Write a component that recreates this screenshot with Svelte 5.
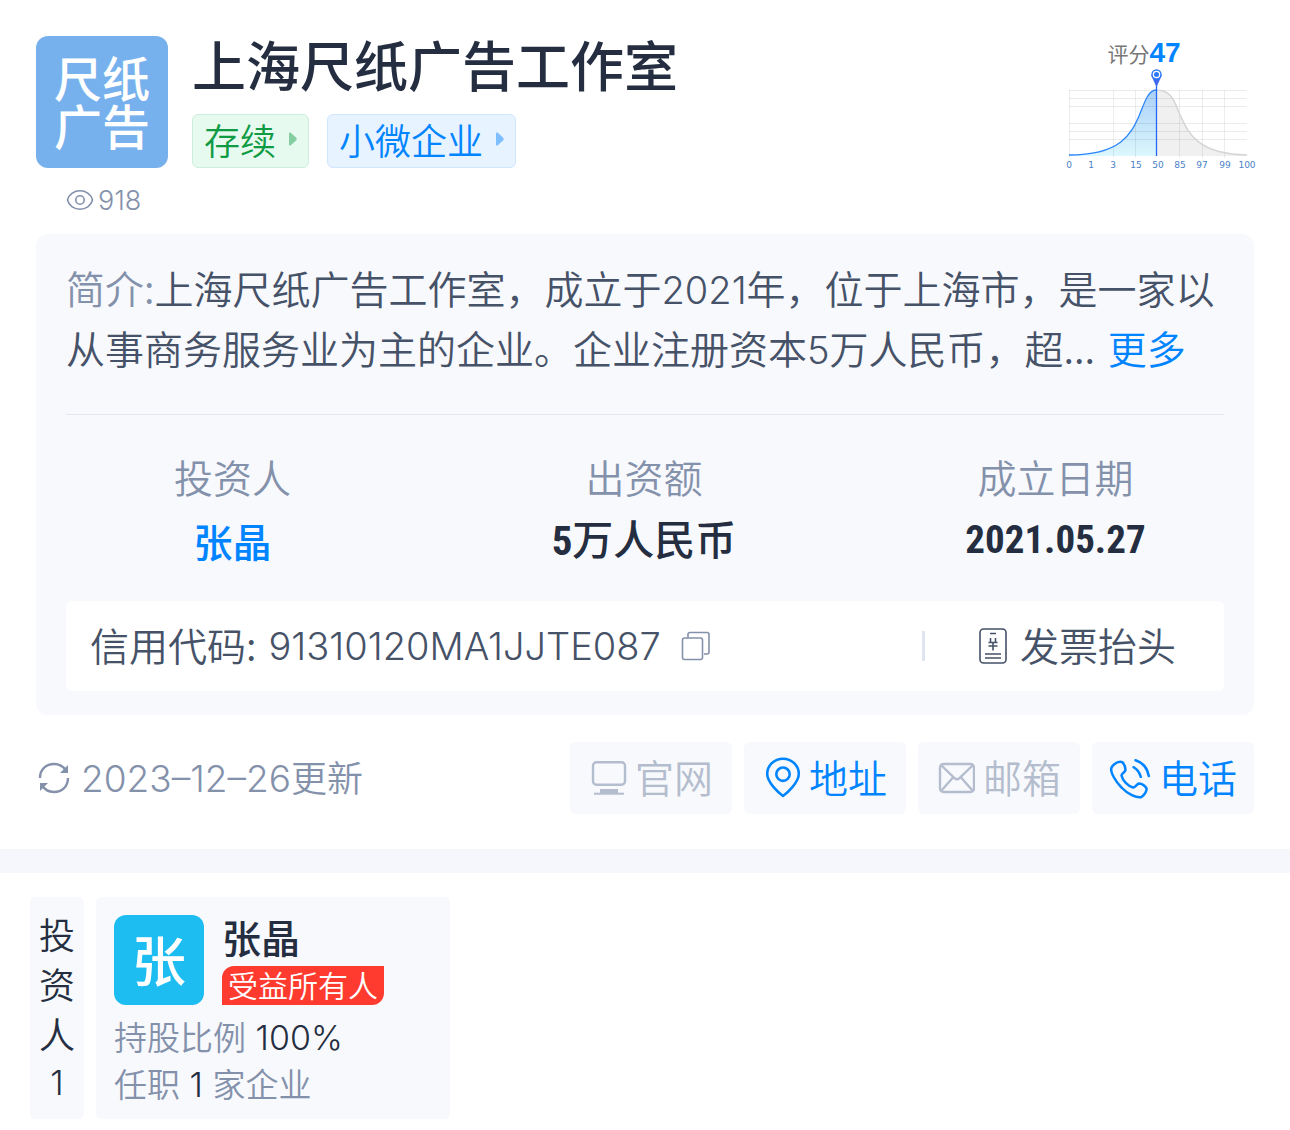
<script lang="ts">
	const company = {
		name: "上海尺纸广告工作室",
		views: 918,
		score: 47,
		code: "91310120MA1JJTE087",
	};
	// [label, x] under the score curve
	const ticks: [string, number][] = [
		["0", 3], ["1", 25], ["3", 47], ["15", 70], ["50", 92],
		["85", 114], ["97", 136], ["99", 159], ["100", 181],
	];
	const gridX = [3, 47, 69, 113, 136, 158];
	const gridY = [24, 32, 40, 57, 65, 73];
	const sideLabel = ["投", "资", "人"];
</script>

<main>
	<header>
		<div class="logo"><span>尺纸</span><span>广告</span></div>
		<div class="heading">
			<h1>{company.name}</h1>
			<div class="tags">
				<button type="button" class="tag green">存续
					<svg width="10" height="16" viewBox="0 0 10 16"><path d="M1 2.5Q1 1 2.500 1.500L8 6.500Q9.500 8 8 9.500L2.500 14.500Q1 15 1 13.500Z" fill="currentColor" /></svg>
				</button>
				<button type="button" class="tag blue">小微企业
					<svg width="10" height="16" viewBox="0 0 10 16"><path d="M1 2.5Q1 1 2.500 1.500L8 6.500Q9.500 8 8 9.500L2.500 14.500Q1 15 1 13.500Z" fill="currentColor" /></svg>
				</button>
			</div>
		</div>
		<div class="score">
			<div class="score-text">评分<b>{company.score}</b></div>
			<svg width="192" height="106" viewBox="0 0 192 106">
				<defs>
					<linearGradient id="fill" x1="0" y1="0" x2="0" y2="1">
						<stop offset="0" stop-color="#a9d0f8" />
						<stop offset="1" stop-color="#dcf7fd" />
					</linearGradient>
				</defs>
				<path d="M90 24C107 24 109 38 115 51C123 68 132 88 181 89V90H90Z" fill="#f0f0f0" />
				<path d="M3 89C55 89 65 68 73 50C78 38 82 24 90 24V90H3Z" fill="url(#fill)" />
				{#each gridY as y}
					<path d="M3 {y}.5H181" stroke="#000" stroke-opacity=".08" />
				{/each}
				{#each gridX as x}
					<path d="M{x}.5 24V92" stroke="#000" stroke-opacity=".07" />
				{/each}
				<path d="M90 24C107 24 109 38 115 51C123 68 132 88 181 89" fill="none" stroke="#d5d5d5" stroke-width="1.5" />
				<path d="M3 89C55 89 65 68 73 50C78 38 82 24 90 24" fill="none" stroke="#2b85fb" stroke-width="1.3" />
				<path d="M90.500 14V90" stroke="#2468f5" stroke-width="1.3" />
				<path d="M85 9L90.500 21L96 9Z" fill="#3d68f2" />
				<circle cx="90.500" cy="8.500" r="4.500" fill="#fff" stroke="#2b78f8" stroke-width="1.400" />
				<circle cx="90.500" cy="8.500" r="2.500" fill="#2b78f8" />
				{#each ticks as [label, x]}
					<text {x} y="102" text-anchor="middle">{label}</text>
				{/each}
			</svg>
		</div>
	</header>

	<div class="views">
		<svg width="28" height="22" viewBox="0 0 28 22" fill="none" stroke="currentColor" stroke-width="1.6"><path d="M1.500 11C3 5 8.500 1.800 14 1.800S25 5 26.500 11C25 17 19.500 20.200 14 20.200S3 17 1.500 11Z" /><circle cx="14" cy="11" r="4.200" /></svg>
		<span>{company.views}</span>
	</div>

	<section class="panel">
		<p class="intro"><span class="label">简介:</span>上海尺纸广告工作室，成立于<span class="num">2021</span>年，位于上海市，是一家以从事商务服务业为主的企业。企业注册资本<span class="num">5</span>万人民币，超... <a href="#more">更多</a></p>
		<dl>
			<div><dt>投资人</dt><dd><a href="#investor">张晶</a></dd></div>
			<div><dt>出资额</dt><dd class="amount"><span class="din">5</span>万人民币</dd></div>
			<div><dt>成立日期</dt><dd class="din">2021.05.27</dd></div>
		</dl>
		<div class="credit">
			<span class="code-label">信用代码:</span>
			<span class="num code">{company.code}</span>
			<button type="button" class="copy" aria-label="复制">
				<svg width="30" height="30" viewBox="0 0 30 30" fill="none" stroke="currentColor" stroke-width="1.600"><path d="M7 7V3.500Q7 1.500 9 1.500H26Q28 1.500 28 3.500V21Q28 23 26 23H23" /><rect x="1.500" y="7" width="20" height="21.500" rx="2" /></svg>
			</button>
			<button type="button" class="invoice">
				<svg width="28" height="38" viewBox="0 0 28 38" fill="none" stroke="currentColor" stroke-width="1.600"><rect x="1" y="2" width="26" height="34" rx="3.500" /><path d="M11 6.500H17M11.500 11V15M16.500 11V15M9.500 15.500H18.500M9.500 19H18.500M14 15.500V23.500M6 27H22M6 31H22" /></svg>
				<span>发票抬头</span>
			</button>
		</div>
	</section>

	<div class="actions">
		<button type="button" class="update">
			<svg width="36" height="34" viewBox="0 0 36 34" fill="none" stroke="currentColor" stroke-width="2.400"><path d="M4 17C4 8 10.500 3 18 3C23 3 27 5 30 9.500M32 17C32 26 25.500 31 18 31C13 31 9 29 6 24.500" /><path d="M32 4V12H24ZM4 30V22H12Z" fill="currentColor" stroke="none" /></svg>
			<span class="num">2023–12–26</span><span class="up">更新</span>
		</button>
		<button type="button" class="act" disabled>
			<svg width="38" height="38" viewBox="0 0 38 38" fill="none" stroke="currentColor" stroke-width="2.400"><rect x="4" y="3.200" width="32" height="22.500" rx="3.500" /><path d="M11 32H29" stroke-width="4" /><path d="M5 34.700H35" stroke-width="2" /></svg>
			<span>官网</span>
		</button>
		<button type="button" class="act">
			<svg width="38" height="42" viewBox="0 0 38 42" fill="none" stroke="currentColor" stroke-width="2.600"><path d="M20 39C16 36 4.200 25.500 4.200 17A15.800 15.300 0 0 1 35.800 17C35.800 25.500 24 36 20 39Z" stroke-linejoin="round" /><circle cx="20" cy="17.200" r="6.700" /></svg>
			<span>地址</span>
		</button>
		<button type="button" class="act" disabled>
			<svg width="38" height="34" viewBox="0 0 38 34" fill="none" stroke="currentColor" stroke-width="2.400"><rect x="3" y="3" width="34" height="28" rx="3.500" /><path d="M4.500 4.500L18 17.500Q20 19 22 17.500L35.500 4.500M4.500 29.500L16 16.500M35.500 29.500L24 16.500" /></svg>
			<span>邮箱</span>
		</button>
		<button type="button" class="act">
			<svg width="42" height="42" viewBox="0 0 42 42" fill="none" stroke="currentColor" stroke-width="2.500" stroke-linecap="round" stroke-linejoin="round"><path d="M5 7.500C8 5 11.500 4.500 13.500 5.200C15.500 7.500 16.500 11 16.500 13C16 15.500 12.500 16 12.500 18.500C13.500 23.500 19 29 24 30.500C26.500 30.500 27.500 27 30 26.500C33 26.700 36 29 37.500 31.200C38 34 35.500 38 32.500 40C28 41.500 18 36.500 12.500 30.500C6.500 24.500 1.500 15.500 2.200 11.500C2.700 10.200 3.800 8.500 5 7.500Z" /><path d="M26.500 3.200C33.500 5.500 38.500 11.500 39.800 19M24.500 10.200C28 12.200 30.500 15.500 31.800 19.800" /></svg>
			<span>电话</span>
		</button>
	</div>
</main>

<hr />

<section class="investors">
	<div class="side">
		{#each sideLabel as c}
			<span>{c}</span>
		{/each}
		<span class="count">1</span>
	</div>
	<div class="person">
		<div class="top">
			<div class="avatar">张</div>
			<div>
				<h2>张晶</h2>
				<span class="badge">受益所有人</span>
			</div>
		</div>
		<p>持股比例<span class="val">{" 100%"}</span></p>
		<p>任职<span class="val">{" 1 "}</span>家企业</p>
	</div>
</section>

<style>
	:global(body) {
		margin: 0;
		background: #fff;
		color: #465268;
		font-family: "Noto Sans CJK SC", sans-serif;
		font-size: 39px;
		font-weight: 350;
	}
	main {
		padding: 36px 36px 35px;
	}
	h1, h2, p, dl, dd {
		margin: 0;
	}
	button {
		border: none;
		background: none;
		padding: 0;
		margin: 0;
		font: inherit;
		color: inherit;
		cursor: pointer;
	}
	a {
		color: #0084ff;
		text-decoration: none;
	}
	svg {
		display: block;
		flex: none;
	}
	.num {
		font-family: Inter, sans-serif;
		font-size: 38px;
	}
	header {
		display: flex;
		height: 132px;
	}
	.logo {
		width: 132px;
		height: 132px;
		box-sizing: border-box;
		padding-bottom: 4px;
		border-radius: 12px;
		background: #77b1ed;
		color: #fff;
		display: flex;
		flex-direction: column;
		align-items: center;
		justify-content: center;
		font-size: 48px;
		line-height: 48px;
		font-weight: 500;
	}
	.heading {
		flex: 1;
		padding-left: 24px;
		display: flex;
		flex-direction: column;
		justify-content: space-between;
	}
	h1 {
		font-size: 54px;
		line-height: 56px;
		font-weight: 500;
		color: #242e40;
	}
	.tags {
		display: flex;
		gap: 18px;
	}
	.tag {
		display: flex;
		align-items: center;
		gap: 12px;
		height: 54px;
		box-sizing: border-box;
		padding: 0 10px 4px 11px;
		border: 1px solid;
		border-radius: 6px;
		font-size: 36px;
		line-height: 48px;
	}
	.tag svg {
		opacity: .45;
	}
	.green {
		color: #0e9b43;
		background: #e7faf0;
		border-color: #cdeedc;
	}
	.blue {
		color: #0084ff;
		background: #e7f3ff;
		border-color: #cfe6ff;
	}
	.score {
		width: 192px;
		margin-right: -4px;
	}
	.score-text {
		display: flex;
		align-items: baseline;
		justify-content: center;
		height: 30px;
		padding-right: 36px;
		font-size: 21px;
		line-height: 34px;
		font-weight: 400;
		color: #777;
	}
	.score-text b {
		font-family: "Liberation Sans", sans-serif;
		font-size: 28px;
		color: #0084ff;
	}
	.score text {
		font-family: "DejaVu Sans", sans-serif;
		font-size: 9px;
		font-weight: 400;
		fill: #4a7fc8;
	}
	.views {
		display: flex;
		align-items: center;
		gap: 4px;
		height: 64px;
		padding: 0 0 2px 30px;
		color: #8491ab;
		font-family: Inter, sans-serif;
		font-size: 27px;
	}
	.panel {
		padding: 23px 30px 24px;
		border-radius: 12px;
		background: #f8f9fd;
	}
	.intro {
		line-height: 60px;
		padding-bottom: 37px;
		border-bottom: 1px solid #e2e7ef;
	}
	.intro .num {
		line-height: 1;
	}
	.intro a {
		margin-left: 4px;
	}
	.label, dt {
		color: #8491ab;
	}
	dl {
		display: grid;
		grid-template-columns: 2fr 3fr 2fr;
		padding: 31px 4px 27px 2px;
		text-align: center;
	}
	dt {
		line-height: 60px;
	}
	dd {
		line-height: 68px;
		font-weight: 500;
		color: #242e40;
	}
	.din {
		font-family: "Roboto Condensed", Roboto, sans-serif;
		font-size: 39px;
		font-weight: 700;
	}
	.amount {
		font-size: 41px;
		line-height: 62px;
	}
	.amount .din {
		font-size: 41px;
		line-height: 1;
	}
	.credit {
		display: flex;
		align-items: center;
		height: 90px;
		padding: 0 24px;
		border-radius: 6px;
		background: #fff;
	}
	.code-label, .invoice span, .act span {
		padding-bottom: 4px;
	}
	.code {
		margin: 0 20px 0 12px;
	}
	.copy {
		color: #8491ab;
	}
	.invoice {
		display: flex;
		align-items: center;
		gap: 13px;
		margin-left: auto;
		padding: 0 24px 0 54px;
		line-height: 30px;
		border-left: 3px solid #e0e6f1;
		height: 30px;
	}
	.actions {
		display: flex;
		align-items: center;
		gap: 12px;
		padding-top: 27px;
	}
	.update {
		display: flex;
		align-items: center;
		margin-right: auto;
		font-size: 36px;
		color: #8491ab;
	}
	.update .num {
		font-size: 37px;
		padding-left: 9px;
	}
	.up {
		padding-bottom: 4px;
	}
	.act {
		display: flex;
		align-items: center;
		justify-content: center;
		gap: 8px;
		width: 162px;
		height: 72px;
		border-radius: 6px;
		background: #f8f9fd;
		color: #0084ff;
	}
	.act:disabled {
		color: #b4bdcd;
		cursor: default;
	}
	hr {
		margin: 0;
		border: none;
		height: 24px;
		background: #f6f7fc;
	}
	.investors {
		display: flex;
		gap: 12px;
		padding: 24px 30px 11px;
	}
	.side, .person {
		border-radius: 6px;
		background: #f8f9fd;
	}
	.side {
		width: 54px;
		box-sizing: border-box;
		padding: 11px 0;
		display: flex;
		flex-direction: column;
		align-items: center;
		font-size: 36px;
		line-height: 50px;
		color: #242e40;
	}
	.count {
		font-family: Inter, sans-serif;
		font-size: 34px;
	}
	.person {
		width: 354px;
		box-sizing: border-box;
		padding: 18px 18px 12px;
	}
	.top {
		display: flex;
		gap: 18px;
		margin-bottom: 8px;
	}
	.avatar {
		width: 90px;
		height: 90px;
		border-radius: 12px;
		background: #1dbcf1;
		color: #fff;
		text-align: center;
		font-size: 54px;
		line-height: 88px;
		font-weight: 500;
	}
	h2 {
		font-size: 39px;
		line-height: 42px;
		padding-bottom: 9px;
		font-weight: 500;
		color: #242e40;
	}
	.badge {
		display: block;
		padding: 0 6px 3px;
		border-radius: 12px 0;
		background: #ff3b30;
		color: #fff;
		font-size: 30px;
		line-height: 36px;
	}
	.person p {
		font-size: 33px;
		line-height: 47px;
		color: #8491ab;
	}
	.val {
		font-family: Inter, sans-serif;
		font-size: 34px;
		line-height: 1;
		color: #242e40;
	}
</style>
